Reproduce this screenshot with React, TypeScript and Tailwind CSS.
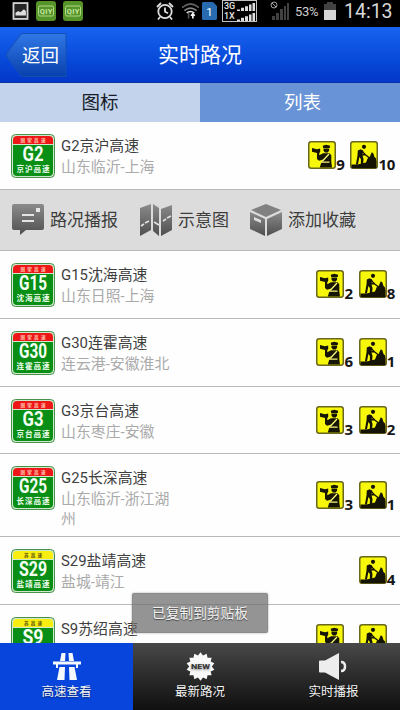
import React from "react";

type Road = {
  code: string;
  name: string;
  route: string;
  police?: number;
  works?: number;
  height: string;
};

const roads: Road[] = [
  { code: "G2", name: "京沪高速", route: "山东临沂-上海", police: 9, works: 10, height: "h-[68px]" },
  { code: "G15", name: "沈海高速", route: "山东日照-上海", police: 2, works: 8, height: "h-[68px]" },
  { code: "G30", name: "连霍高速", route: "连云港-安徽淮北", police: 6, works: 1, height: "h-[68px]" },
  { code: "G3", name: "京台高速", route: "山东枣庄-安徽", police: 3, works: 2, height: "h-[67px]" },
  { code: "G25", name: "长深高速", route: "山东临沂-浙江湖州", police: 3, works: 1, height: "h-[83px]" },
  { code: "S29", name: "盐靖高速", route: "盐城-靖江", works: 4, height: "h-[68px]" },
  { code: "S9", name: "苏绍高速", route: "", police: 6, works: 3, height: "h-[68px]" },
];

function RoadSign({ code, name }: { code: string; name: string }) {
  const national = code.startsWith("G");
  const w = code.length === 2 ? 21 : 28;
  return (
    <svg viewBox="0 0 44 44" className="h-11 w-11 shrink-0">
      <rect x="0.5" y="0.5" width="43" height="43" rx="4" fill="#d0e8cb" stroke="#47914a" />
      <path d="M2 11h40v27a4 4 0 0 1-4 4H6a4 4 0 0 1-4-4z" fill="#098f16" />
      <path d="M2 10V6a4 4 0 0 1 4-4h32a4 4 0 0 1 4 4v4z" fill={national ? "#ee1717" : "#f8ee11"} />
      <text x="22" y="7.9" textAnchor="middle" textLength={national ? 25 : 18} fontSize="4.6" fontWeight="700" fill={national ? "#ffc9b4" : "#5c5110"}>
        {national ? "国家高速" : "苏高速"}
      </text>
      <text x={22 - w / 2} y="27.4" textLength={w} lengthAdjust="spacingAndGlyphs" fontSize="20.5" fontWeight="700" fill="#f5fff3" className="font-[Roboto,sans-serif]">
        {code}
      </text>
      <text x="5.5" y="37.7" textLength="33" fontSize="7.6" fontWeight="700" fill="#effdec">
        {name}
      </text>
    </svg>
  );
}

function PoliceIcon() {
  return (
    <svg viewBox="0 0 28 28" className="h-7 w-7">
      <rect x="0.75" y="0.75" width="26.5" height="26.5" rx="2.5" fill="#f7f70c" stroke="#69671c" strokeWidth="1.5" />
      <path d="M14.7 4.7l3.5-.9 4 .9-.5 2.2h-6.5z" fill="#171504" />
      <path d="M15.5 7.6h5.6v2.2l-1.4 1.7h-2.8l-1.4-1.7z" fill="#171504" />
      <path d="M4 7l5 1.2 3.2-.7v3.5l-.9 1v2.3l3.7-2h6.5l1.8 2v6.7l.7 5.5H11.8l1.5-5 2-3-4.3 1.3-2-1.8V12L4 10.8z" fill="#171504" />
      <path d="M21 13l-6.7 7.2M13 21.2h8.5" fill="none" stroke="#f7f77b" strokeWidth="1.3" />
    </svg>
  );
}

function WorksIcon() {
  return (
    <svg viewBox="0 0 28 28" className="h-7 w-7">
      <rect x="0.75" y="0.75" width="26.5" height="26.5" rx="2.5" fill="#f7f70c" stroke="#69671c" strokeWidth="1.5" />
      <circle cx="14" cy="5.8" r="2.1" fill="#151304" />
      <path d="M7.8 9.6l3-1.4 2.4 1.7-.8 4.3 1.1 3.8-.4 5.5h-2.2v-5.5l-1.5-2-1.5 7.5H5.9l1.6-9z" fill="#151304" />
      <path d="M11.8 9.5l3 3.8 5.7 4.5M12 14l3.5-.5" fill="none" stroke="#151304" strokeWidth="1.3" />
      <path d="M1.5 23.5h6l8.5-2 1.7-4.3 1.8-.9 2.3-5 1.5.9 1.2 3.8 1.4 1.2.6 3v7H1.5z" fill="#151304" />
    </svg>
  );
}

function Notice({ count, children }: { count: number; children: React.ReactNode }) {
  return (
    <div className="flex items-end">
      {children}
      <span className="mb-[-3px] font-['Noto_Sans',sans-serif] text-[15px] leading-4 font-bold tracking-[-0.3px] text-[#161616]">{count}</span>
    </div>
  );
}

function RoadRow({ road }: { road: Road }) {
  return (
    <li className={`${road.height} flex shrink-0 items-start justify-between border-b border-[#b9b9b9] bg-[#fefefe] pr-[5px] pl-[11px]`}>
      <div className="flex pt-3">
        <RoadSign code={road.code} name={road.name} />
        <div className="ml-[6px] w-[118px] pt-px whitespace-nowrap">
          <p className="text-[14.9px] leading-[22px] text-[#3e3e3e]">{road.code}{road.name}</p>
          <p className="w-[114px] text-[14.9px] leading-5 break-all whitespace-normal text-[#aaa]">{road.route}</p>
        </div>
      </div>
      <div className="flex h-full items-center gap-[6px] pb-px">
        {road.police && <Notice count={road.police}><PoliceIcon /></Notice>}
        {road.works && <Notice count={road.works}><WorksIcon /></Notice>}
      </div>
    </li>
  );
}

function GreyFill({ id }: { id: string }) {
  return (
    <defs>
      <linearGradient id={id} x1="0" y1="0" x2="0" y2="1">
        <stop offset="0" stopColor="#8b8b8b" />
        <stop offset="1" stopColor="#4f4f4f" />
      </linearGradient>
    </defs>
  );
}

function ActionBar() {
  return (
    <li className="flex h-[61px] shrink-0 items-center border-b border-[#b9b9b9] bg-[#dcdcdc] pl-3 text-[17px] text-[#3d3d3d]">
      <svg viewBox="0 0 32 32" className="h-8 w-8">
        <GreyFill id="msg" />
        <path d="M2 0h28q2 0 2 2v22q0 2-2 2H14l-6 5v-5H2q-2 0-2-2V2q0-2 2-2z" fill="url(#msg)" />
        <path d="M10 11h12M10 17h12" stroke="#e4e4e4" strokeWidth="2" />
        <rect x="24" y="4" width="4" height="4" fill="#e8e8e8" />
      </svg>
      <span className="ml-[6px] w-[84px] pt-[2px] whitespace-nowrap">路况播报</span>
      <svg viewBox="0 0 32 32" className="ml-[6px] h-8 w-8">
        <GreyFill id="map" />
        <path d="M0 4L11 0v26L0 32zM13 0l6 4v28l-6-5zM21 5l11-4v25l-11 6z" fill="url(#map)" />
        <path d="M1 22l3-2m1-1l4-2M14 18l5 3M23 17l3-2m1-1l4-2" stroke="#e1e1e1" strokeWidth="1.6" />
      </svg>
      <span className="ml-[6px] w-[66px] pt-[2px] whitespace-nowrap">示意图</span>
      <svg viewBox="0 0 32 32" className="ml-[6px] h-8 w-8">
        <GreyFill id="box" />
        <path d="M16 0l15 6-15 7L1 6z" fill="#818181" />
        <path d="M0 8l15 7v17L0 25zM17 15l15-7v17l-15 7z" fill="url(#box)" />
        <path d="M4 13l7 3v3l-7-3z" fill="#dedede" />
      </svg>
      <span className="ml-[6px] pt-[2px] whitespace-nowrap">添加收藏</span>
    </li>
  );
}

function Signal({ className, color }: { className: string; color: string }) {
  return (
    <svg viewBox="0 0 18 10" preserveAspectRatio="none" className={className}>
      <path d="M0 10V8h3v2zM4 10V6h3v4zM8 10V4h3v6zM12 10V2h2.5v8zM15.5 10V0H18v10z" fill={color} />
    </svg>
  );
}

function QiyiBadge() {
  return (
    <svg viewBox="0 0 20 20" className="h-5 w-5">
      <rect width="20" height="20" rx="3" fill="#569329" />
      <rect x="2.5" y="5" width="15" height="10" rx="1.5" fill="none" stroke="#aed986" />
      <text x="3.7" y="12.7" fontSize="7.5" fontWeight="700" textLength="12.6" fill="#c8e8a5" className="font-[Roboto,sans-serif]">QIY</text>
    </svg>
  );
}

function StatusBar() {
  return (
    <div className="flex h-[27px] shrink-0 items-start justify-between bg-black pl-3">
      <div className="flex gap-[7px] pt-px">
        <svg viewBox="0 0 18 20" className="mt-px h-[18px] w-[17px]">
          <rect x="1.2" y="1.2" width="15.6" height="17.6" fill="#252525" stroke="#d5d5d5" strokeWidth="2" />
          <path d="M3.5 15V12l3-2 2.3 1.5 4-3.5L15 10v5z" fill="#ddd" />
        </svg>
        <QiyiBadge />
        <QiyiBadge />
      </div>
      <div className="flex h-[22px]">
        <svg viewBox="0 0 18 18" className="mt-[2px] mr-[8px] h-[18px] w-[18px]" fill="none" stroke="#ddd" strokeWidth="1.8">
          <circle cx="9" cy="9.5" r="6.7" />
          <path d="M9 5.5v4.3l3 1.5M1 5l4-4M17 5l-4-4M4 15l-2 2.5M14 15l2 2.5" />
        </svg>
        <svg viewBox="0 0 18 18" className="mt-[2px] mr-[3px] h-[18px] w-[17px]" fill="none" strokeWidth="1.7">
          <path d="M0 5.5q9-8 18 0" stroke="#656565" />
          <path d="M2.5 8.5q6.5-5 13 0" stroke="#858585" />
          <path d="M5 11q4-3 8 0" stroke="#ddd" />
          <path d="M7 11v6" stroke="#555" />
          <path d="M11.5 17v-5m-2 2l2-2.2 2 2.2" stroke="#fff" />
        </svg>
        <svg viewBox="0 0 15 18" className="mt-[2px] h-[18px] w-[15px]">
          <path d="M1 0h10l4 4v13l-1 1H1l-1-1V1z" fill="#286bb0" />
          <text x="7.5" y="13.5" textAnchor="middle" fontSize="11.5" fill="#fff" className="font-[Roboto,sans-serif]">1</text>
        </svg>
        <div className="ml-[5px] flex h-[22px] w-[35px] flex-col justify-center border border-[#c2c2c2] pl-[1px] font-[Roboto,sans-serif] text-[9px] leading-[10px] font-medium text-[#e4e4e4]">
          <div className="flex items-end gap-[2px]"><span className="w-[11px]">3G</span><Signal className="h-[8px] w-[18px]" color="#ddd" /></div>
          <div className="flex items-end gap-[2px]"><span className="w-[11px]">1X</span><Signal className="h-[8px] w-[18px]" color="#ddd" /></div>
        </div>
        <svg viewBox="0 0 20 20" className="mt-px ml-[13px] h-5 w-5">
          <circle cx="4" cy="4" r="3" fill="none" stroke="#a0a0a0" />
          <path d="M2 2l4 4" stroke="#a0a0a0" />
          <path d="M2 19v-4h3v4zM6 19v-7h3v7zM10 19V8h3v11zM14 19V5h2v14zM17 19V2h2v17z" fill="#414141" />
        </svg>
        <span className="ml-[5px] w-[25px] pt-[2px] font-[Roboto,sans-serif] text-[13px] leading-[19px] tracking-[-0.3px] text-[#ccc]">53%</span>
        <svg viewBox="0 0 12 18" className="mt-[2px] ml-[4px] h-[18px] w-3">
          <path d="M3 0h6v2h3v6H0V2h3z" fill="#424242" />
          <path d="M0 8h12v10H0z" fill="#d5d5d5" />
        </svg>
        <span className="ml-2 w-[56px] pt-px font-[Roboto,sans-serif] text-[19.5px] leading-[22px] text-[#d8d8d8]">14:13</span>
      </div>
    </div>
  );
}

function Header() {
  return (
    <header className="flex h-14 shrink-0 items-center border-b border-[#0632a5] bg-linear-to-b from-[#1763ef] to-[#0437ca] text-white">
      <button className="relative ml-[6px] h-[44px] w-[61px]">
        <svg viewBox="0 0 61 44" className="h-full w-full">
          <defs>
            <linearGradient id="back" x1="0" y1="0" x2="0" y2="1">
              <stop stopColor="#3078e6" />
              <stop offset="1" stopColor="#0841ad" />
            </linearGradient>
          </defs>
          <path d="M17 .5h43v43H17q-2 0-3-2L1 24q-1-2 0-4L14 2.5q1-2 3-2z" fill="url(#back)" stroke="#1550b5" />
        </svg>
        <span className="absolute inset-0 flex items-center justify-center pt-[4px] pl-[8px] text-[18.5px]">返回</span>
      </button>
      <h1 className="ml-[91px] pt-[3px] text-[21px]">实时路况</h1>
    </header>
  );
}

function HighwayIcon() {
  return (
    <svg viewBox="0 0 28 29" className="h-[29px] w-7" fill="#f5f9ff">
      <path d="M8.5 1h4l-.5 8H7zM15.5 1h4L21 9h-5zM0 9.5h28v3h-3V16h-2v-3.5H5V16H3v-3.5H0zM6.5 15H12l-.5 13H4zM16 15h5.5L24 28h-7.5z" />
    </svg>
  );
}

function NewIcon() {
  const points = Array.from({ length: 28 }, (_, i) => {
    const r = i % 2 ? 11.3 : 14.2;
    const a = (i * Math.PI) / 14;
    return `${14.5 + r * Math.sin(a)},${14.5 - r * Math.cos(a)}`;
  }).join(" ");
  return (
    <svg viewBox="0 0 29 29" className="h-[29px] w-[29px]">
      <polygon points={points} fill="#f8f8f8" />
      <text x="5" y="17.2" textLength="19" lengthAdjust="spacingAndGlyphs" fontSize="7.5" fontWeight="700" fill="#333" className="font-[Roboto,sans-serif]">NEW</text>
    </svg>
  );
}

function SpeakerIcon() {
  return (
    <svg viewBox="0 0 29 29" className="h-[29px] w-[29px]">
      <path d="M1 8.5h5L20 1v27L6 20.5H1q-1 0-1-1v-10q0-1 1-1z" fill="#ededed" />
      <path d="M22 10q4 0 4 4.5T22 19" fill="none" stroke="#ededed" strokeWidth="2.5" />
    </svg>
  );
}

function NavItem({ label, className, children }: { label: string; className: string; children: React.ReactNode }) {
  return (
    <button className={`${className} flex flex-col items-center pt-[9px] text-[12.5px] leading-[18px] text-[#f4f4f4] [text-shadow:0_1px_2px_#0008]`}>
      {children}
      <span className="mt-[2px]">{label}</span>
    </button>
  );
}

export default function App() {
  return (
    <div lang="zh-CN" className="relative flex h-[710px] w-[400px] flex-col overflow-hidden bg-white font-[Roboto,'Noto_Sans_CJK_SC',sans-serif]">
      <StatusBar />
      <Header />
      <div className="grid h-[39px] shrink-0 grid-cols-2 text-center text-[18.5px] leading-[41px]">
        <button className="h-[39px] bg-[#c4d3ec] text-[#171d29]">图标</button>
        <button className="h-[39px] bg-[#6893d7] pl-[5px] text-white">列表</button>
      </div>
      <ul className="flex min-h-0 flex-1 flex-col overflow-hidden">
        {roads.map((road, index) => (
          <React.Fragment key={road.code}>
            <RoadRow road={road} />
            {index === 0 && <ActionBar />}
          </React.Fragment>
        ))}
      </ul>
      <nav className="flex h-[67px] shrink-0 bg-linear-to-b from-[#494949] to-[#101010]">
        <NavItem label="高速查看" className="w-[133px] bg-[#0745dc]"><HighwayIcon /></NavItem>
        <NavItem label="最新路况" className="w-[134px]"><NewIcon /></NavItem>
        <NavItem label="实时播报" className="w-[133px]"><SpeakerIcon /></NavItem>
      </nav>
      <div className="absolute top-[593px] left-[132px] flex h-10 w-[136px] items-center justify-center rounded-[2px] border border-[#858585]/60 bg-[#707070]/75 pt-px text-[13.7px] text-[#f2f2f2] shadow-[0_0_2px_#0006] [text-shadow:0_1px_1px_#0008]">
        已复制到剪贴板
      </div>
    </div>
  );
}
